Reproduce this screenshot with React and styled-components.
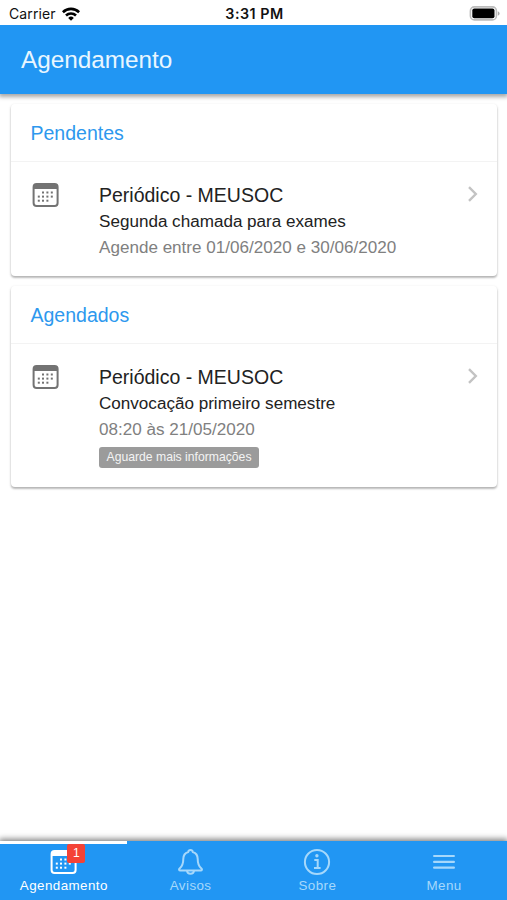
import React, { useState } from "react";
import styled, { createGlobalStyle } from "styled-components";

const GlobalStyle = createGlobalStyle`
  * {
    box-sizing: border-box;
  }
  body {
    margin: 0;
    background: #fff;
    font-family: "Liberation Sans", Arial, sans-serif;
  }
`;

const Screen = styled.div`
  display: flex;
  flex-direction: column;
  height: 900px;
  overflow: hidden;
`;

const StatusBar = styled.div`
  display: grid;
  grid-template-columns: 1fr auto 1fr;
  align-items: center;
  height: 25px;
  padding: 2px 7px 0 9px;
  flex-shrink: 0;
  font-family: Inter, sans-serif;
  color: #111;
`;

const Carrier = styled.div`
  display: flex;
  align-items: center;
  gap: 6px;
  font-size: 14px;
  letter-spacing: 0.1px;
`;

const Clock = styled.div`
  font-size: 14.3px;
  font-weight: 600;
  letter-spacing: 0.5px;
`;

const Battery = styled.svg`
  justify-self: end;
`;

const Header = styled.header`
  display: flex;
  align-items: center;
  height: 69px;
  padding: 0 21px;
  flex-shrink: 0;
  background: #2196f3;
  box-shadow: 0 2px 4px 1px rgba(0, 0, 0, 0.34);
  clip-path: inset(0 0 -10px 0);
`;

const Title = styled.h1`
  margin: 0;
  font-size: 24.3px;
  font-weight: 400;
  color: #e9f6ff;
`;

const Content = styled.main`
  display: flex;
  flex-direction: column;
  flex: 1;
  gap: 10px;
  padding: 10px 10px 0 11px;
`;

const Card = styled.section`
  border-radius: 4px;
  background: #fff;
  box-shadow: 0 2px 2px rgba(0, 0, 0, 0.2), 0 1px 3px rgba(0, 0, 0, 0.16);
`;

const CardHeader = styled.h2`
  display: flex;
  align-items: center;
  height: 58px;
  margin: 0;
  padding: 1px 19.5px 0;
  border-bottom: 1px solid #f3f3f3;
  font-size: 19.5px;
  font-weight: 400;
  color: #2d98ee;
`;

const Item = styled.div`
  display: flex;
  align-items: flex-start;
  height: ${(props) => (props.$tall ? 143 : 114)}px;
  padding: 20px 19px 0 21px;
`;

const ItemText = styled.div`
  flex: 1;
  margin-left: 40px;
`;

const ItemTitle = styled.h3`
  margin: 0;
  font-size: 19.5px;
  font-weight: 400;
  line-height: 26px;
  color: #222;
`;

const Line = styled.p`
  margin: 0;
  font-size: 17.08px;
  line-height: ${(props) => (props.$muted ? 25 : 27)}px;
  color: ${(props) => (props.$muted ? "#808080" : "#222")};
`;

const Tag = styled.span`
  display: block;
  width: 160px;
  height: 21px;
  margin-top: 5px;
  border-radius: 3px;
  background: #9b9b9b;
  font-size: 12.2px;
  line-height: 21px;
  text-align: center;
  color: #f4f4f4;
`;

const Chevron = styled.svg`
  margin-top: 4px;
`;

const TabBar = styled.nav`
  display: grid;
  grid-template-columns: repeat(4, 1fr);
  height: 59px;
  flex-shrink: 0;
  background: #2196f3;
  box-shadow: 0 -1px 6px 1px rgba(0, 0, 0, 0.5);
`;

const Tab = styled.button`
  display: flex;
  flex-direction: column;
  align-items: center;
  padding: 2px 0 0;
  border: 0;
  border-top: 3px solid ${(props) => (props.$active ? "#fff" : "transparent")};
  background: none;
  font-family: inherit;
  color: ${(props) => (props.$active ? "#fff" : "#a6d8fb")};
`;

const TabIcon = styled.span`
  position: relative;
  display: flex;
  align-items: center;
  justify-content: center;
  width: 32px;
  height: 32px;
`;

const TabLabel = styled.span`
  padding-left: 1px;
  font-size: 13.4px;
  line-height: 16px;
  letter-spacing: 0.42px;
`;

const Badge = styled.span`
  position: absolute;
  top: -2px;
  left: 20px;
  width: 18px;
  height: 19px;
  border-radius: 2px;
  background: #f44336;
  font-size: 12px;
  line-height: 19px;
  text-align: center;
  color: #fff;
`;

const CalendarIcon = ({ color = "#737373" }) => (
  <svg width="27" height="26" viewBox="0 0 27 26" fill={color}>
    <rect x="1.6" y="2" width="24" height="22" rx="3" fill="none" stroke={color} strokeWidth="2" />
    <path d="M1.6 7V5a3 3 0 0 1 3-3h18a3 3 0 0 1 3 3v2z" />
    {[
      [11, 10.5], [15.4, 10.5], [19.8, 10.5],
      [6.8, 14.6], [11, 14.6], [15.4, 14.6], [19.8, 14.6],
      [6.8, 18.7], [11, 18.7], [15.4, 18.7],
    ].map(([x, y]) => (
      <rect key={`${x}-${y}`} x={x - 1} y={y - 1} width="2" height="2" />
    ))}
  </svg>
);

const WifiIcon = () => (
  <svg width="18" height="14" viewBox="0 0 18 14" fill="none" stroke="#000" strokeWidth="2.6">
    <path d="M0.9 5.2a11.6 11.6 0 0 1 16.2 0" />
    <path d="M4 8.5a7.2 7.2 0 0 1 10 0" />
    <path d="M9 13.7 6.2 10.9a4 4 0 0 1 5.6 0z" fill="#000" stroke="none" />
  </svg>
);

const BellIcon = () => (
  <svg width="26" height="28" viewBox="0 0 26 28" fill="none" stroke="currentColor" strokeWidth="2" strokeLinejoin="round">
    <path d="M13.5 2c-1.3 0-2.1.8-2.3 2C8 5 6.3 7.5 6.3 11c0 5.5-1 7.3-3.7 9.6-1 .9-.5 1.9.6 1.9h20.6c1.100 0 1.600-1 .6-1.9-2.700-2.300-3.700-4.100-3.700-9.600 0-3.500-1.700-6-4.900-7-.2-1.200-1-2-2.300-2z" />
    <path d="M10 22.600c.2 2 1.600 3.200 3.500 3.200s3.300-1.200 3.500-3.200" />
  </svg>
);

const InfoIcon = () => (
  <svg width="28" height="28" viewBox="0 0 28 28" fill="none" stroke="currentColor">
    <circle cx="14" cy="14" r="12.1" strokeWidth="2" />
    <circle cx="13.9" cy="7.8" r="1.7" fill="currentColor" stroke="none" />
    <path d="M11.3 11.9h3.4v8M11 20.1h6.6" strokeWidth="2" />
  </svg>
);

const MenuIcon = () => (
  <svg width="22" height="16" viewBox="0 0 22 16" stroke="currentColor" strokeWidth="2.2" strokeLinecap="round">
    <path d="M1.1 2h19.8M1.1 7.9h19.8M1.1 13.7h19.8" />
  </svg>
);

const cards = [
  {
    header: "Pendentes",
    title: "Periódico - MEUSOC",
    description: "Segunda chamada para exames",
    date: "Agende entre 01/06/2020 e 30/06/2020",
  },
  {
    header: "Agendados",
    title: "Periódico - MEUSOC",
    description: "Convocação primeiro semestre",
    date: "08:20 às 21/05/2020",
    tag: "Aguarde mais informações",
  },
];

const tabs = [
  { label: "Agendamento", icon: <CalendarIcon color="#fff" />, badge: 1 },
  { label: "Avisos", icon: <BellIcon /> },
  { label: "Sobre", icon: <InfoIcon /> },
  { label: "Menu", icon: <MenuIcon /> },
];

const App = () => {
  const [activeTab, setActiveTab] = useState("Agendamento");

  return (
    <Screen>
      <GlobalStyle />
      <StatusBar>
        <Carrier>
          Carrier
          <WifiIcon />
        </Carrier>
        <Clock>3:31 PM</Clock>
        <Battery width="31" height="15" viewBox="0 0 31 15">
          <rect x="1.4" y="0.9" width="26" height="13" rx="4" fill="#fff" stroke="#bcbcbc" strokeWidth="1.6" />
          <rect x="3.3" y="2.6" width="22.2" height="9.6" rx="2" fill="#000" />
          <path d="M28.8 5.2c2.4 1 2.4 3.6 0 4.6z" fill="#aaa" />
        </Battery>
      </StatusBar>
      <Header>
        <Title>Agendamento</Title>
      </Header>
      <Content>
        {cards.map((card) => (
          <Card key={card.header}>
            <CardHeader>{card.header}</CardHeader>
            <Item $tall={!!card.tag}>
              <CalendarIcon />
              <ItemText>
                <ItemTitle>{card.title}</ItemTitle>
                <Line>{card.description}</Line>
                <Line $muted>{card.date}</Line>
                {card.tag && <Tag>{card.tag}</Tag>}
              </ItemText>
              <Chevron width="11" height="16" viewBox="0 0 11 16" fill="none" stroke="#c3c3c3" strokeWidth="2.4">
                <path d="M2 1.2 8.8 8 2 14.8" />
              </Chevron>
            </Item>
          </Card>
        ))}
      </Content>
      <TabBar>
        {tabs.map((tab) => (
          <Tab
            key={tab.label}
            type="button"
            $active={tab.label === activeTab}
            onClick={() => setActiveTab(tab.label)}
          >
            <TabIcon>
              {tab.icon}
              {tab.badge && <Badge>{tab.badge}</Badge>}
            </TabIcon>
            <TabLabel>{tab.label}</TabLabel>
          </Tab>
        ))}
      </TabBar>
    </Screen>
  );
};

export default App;
